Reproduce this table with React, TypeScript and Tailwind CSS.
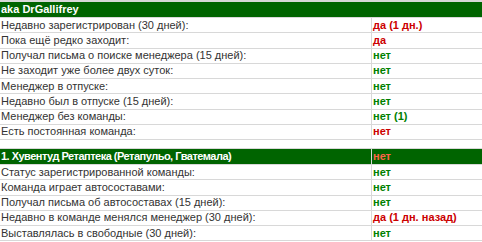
const ownerRows: { label: string; value: string; bad?: boolean }[] = [
  { label: "Недавно зарегистрирован (30 дней):", value: "да (1 дн.)", bad: true },
  { label: "Пока ещё редко заходит:", value: "да", bad: true },
  { label: "Получал письма о поиске менеджера (15 дней):", value: "нет" },
  { label: "Не заходит уже более двух суток:", value: "нет" },
  { label: "Менеджер в отпуске:", value: "нет" },
  { label: "Недавно был в отпуске (15 дней):", value: "нет" },
  { label: "Менеджер без команды:", value: "нет (1)" },
  { label: "Есть постоянная команда:", value: "нет", bad: true },
];

const teamRows: { label: string; value: string; bad?: boolean }[] = [
  { label: "Статус зарегистрированной команды:", value: "нет" },
  { label: "Команда играет автосоставами:", value: "нет" },
  { label: "Получал письма об автосоставах (15 дней):", value: "нет" },
  { label: "Недавно в команде менялся менеджер (30 дней):", value: "да (1 дн. назад)", bad: true },
  { label: "Выставлялась в свободные (30 дней):", value: "нет" },
];

const Row = ({ label, value, bad }: { label: string; value: string; bad?: boolean }) => (
  <div className="flex h-[15.25px] border-b border-[#d8d8d8]">
    <div className="flex w-[372px] items-center border-r border-[#d8d8d8] pl-[1px] text-[#333]">
      {label}
    </div>
    <div
      className={`flex flex-1 items-center pl-[1px] font-bold ${
        bad ? "text-[#cc0000]" : "text-[#008000]"
      }`}
    >
      {value}
    </div>
  </div>
);

export default function App() {
  return (
    <div
      className="w-[482px] bg-white text-[11px] leading-none"
      style={{ fontFamily: '"Liberation Sans", Arial, sans-serif' }}
    >
      <div className="border-t-2 border-[#d8d8d8]">
        <div className="flex h-[16px] items-center border-b border-[#d8d8d8] bg-[#006400] pl-[1px] font-bold text-white">
          aka DrGallifrey
        </div>
        {ownerRows.map((row) => (
          <Row key={row.label} {...row} />
        ))}
      </div>

      <div className="mt-[8px] border-t border-[#d8d8d8]">
        <div className="flex h-[16px] border-b border-[#d8d8d8] bg-[#006400]">
          <div className="flex w-[372px] items-center border-r border-[#d8d8d8] pl-[1px] font-bold tracking-[-0.5px] text-white">
            1. Хувентуд Ретаптека (Ретапульо, Гватемала)
          </div>
          <div className="flex flex-1 items-center pl-[1px] font-bold text-[#ff6347]">нет</div>
        </div>
        {teamRows.map((row) => (
          <Row key={row.label} {...row} />
        ))}
      </div>
    </div>
  );
}
